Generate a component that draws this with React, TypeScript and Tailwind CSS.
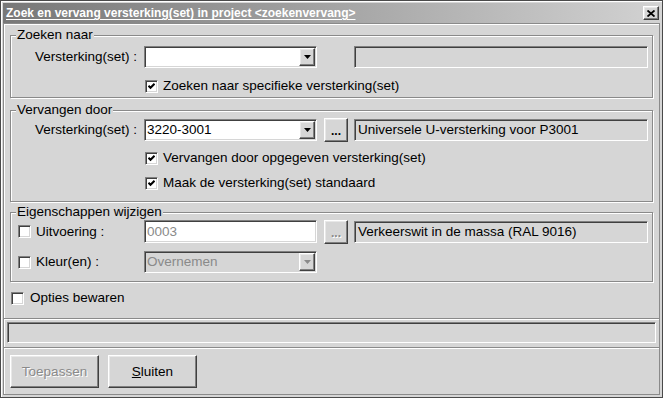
import React from "react";

const sunken =
  "border border-t-[#808080] border-l-[#808080] border-b-white border-r-white shadow-[inset_1px_1px_0_#404040,inset_-1px_-1px_0_#d6d6d6]";
const raised =
  "border border-t-white border-l-white border-b-[#404040] border-r-[#404040] shadow-[inset_-1px_-1px_0_#808080,inset_1px_1px_0_#e8e8e8]";
const group =
  "relative border border-[#8a8a8a] shadow-[inset_1px_1px_0_#fff,1px_1px_0_#fff]";

const Arrow = ({ disabled }: { disabled?: boolean }) => (
  <svg width="7" height="4" viewBox="0 0 7 4">
    <polygon points="0,0 7,0 3.5,4" fill={disabled ? "#8a8a8a" : "#000"} />
  </svg>
);

const Check = ({ checked }: { checked?: boolean }) => (
  <span className={`w-[13px] h-[13px] bg-white shrink-0 flex items-center justify-center ${sunken}`}>
    {checked && (
      <svg width="7" height="7" viewBox="0 0 7 7">
        <path d="M0.5 2.8 L2.5 4.8 L6.5 0.8" stroke="#000" strokeWidth="2" fill="none" />
      </svg>
    )}
  </span>
);

const Combo = ({ value, disabled }: { value?: string; disabled?: boolean }) => (
  <div
    className={`w-[173px] h-[22px] flex items-center shrink-0 ${sunken} ${
      disabled ? "bg-[#d6d6d6] text-[#8a8a8a]" : "bg-white text-black"
    }`}
  >
    <span className="pl-[2px] flex-1 truncate">{value}</span>
    <span className={`w-[16px] h-[18px] m-[1px] bg-[#d6d6d6] flex items-center justify-center ${raised}`}>
      <Arrow disabled={disabled} />
    </span>
  </div>
);

const Dots = ({ disabled }: { disabled?: boolean }) => (
  <button
    className={`w-[24px] h-[24px] ml-[7px] shrink-0 bg-[#d6d6d6] flex items-end justify-center pb-[4px] font-bold leading-none text-[12px] ${raised} ${
      disabled ? "text-[#8a8a8a] [text-shadow:1px_1px_0_#fff]" : "text-black"
    }`}
  >
    ...
  </button>
);

const Field = ({ value, gap = "ml-[6px]" }: { value?: string; gap?: string }) => (
  <div className={`w-[294px] h-[22px] ${gap} bg-[#d6d6d6] flex items-center pl-[3px] ${sunken}`}>
    {value}
  </div>
);

const CheckRow = ({ label, checked }: { label: string; checked?: boolean }) => (
  <div className="h-[16px] flex items-center gap-[5px] pl-[134px]">
    <Check checked={checked} />
    <span>{label}</span>
  </div>
);

const Legend = ({ text }: { text: string }) => (
  <span className="absolute left-[5px] top-[-9px] px-[1px] bg-[#d6d6d6] leading-[16px]">{text}</span>
);

export default function App() {
  return (
    <div className="w-[663px] h-[398px] bg-[#d6d6d6] border border-[#4a4a4a] p-[2px] flex flex-col shadow-[inset_1px_1px_0_#fff] font-['Liberation_Sans',Arial,sans-serif] text-[13.5px] text-black leading-none">
      <div className="h-[20px] bg-linear-to-r from-[#787878] to-[#d2d2d2] flex items-center pl-[3px] pr-[1px]">
        <span className="text-white font-bold text-[12px] underline underline-offset-2">
          Zoek en vervang versterking(set) in project &lt;zoekenvervang&gt;
        </span>
        <span className={`ml-auto w-[16px] h-[14px] bg-[#d6d6d6] flex items-center justify-center ${raised}`}>
          <svg width="8" height="7" viewBox="0 0 8 7">
            <path d="M0.5 0.5 L7.5 6.5 M7.5 0.5 L0.5 6.5" stroke="#000" strokeWidth="1.8" />
          </svg>
        </span>
      </div>

      <div className="flex-1 border border-[#8a8a8a] shadow-[inset_1px_1px_0_#fff] flex flex-col">
        <div className={`${group} mt-[11px] mx-[6px] h-[63px] pt-[10px]`}>
          <Legend text="Zoeken naar" />
          <div className="h-[22px] flex items-center">
            <span className="w-[133px] pr-[7px] text-right">Versterking(set) :</span>
            <Combo />
            <Field value="" gap="ml-[37px]" />
          </div>
          <div className="mt-[10px]">
            <CheckRow label="Zoeken naar specifieke versterking(set)" checked />
          </div>
        </div>

        <div className={`${group} mt-[12px] mx-[6px] h-[92px] pt-[7px]`}>
          <Legend text="Vervangen door" />
          <div className="h-[24px] flex items-center">
            <span className="w-[133px] pr-[7px] text-right">Versterking(set) :</span>
            <Combo value="3220-3001" />
            <Dots />
            <Field value="Universele U-versterking voor P3001" />
          </div>
          <div className="mt-[8px]">
            <CheckRow label="Vervangen door opgegeven versterking(set)" checked />
          </div>
          <div className="mt-[9px]">
            <CheckRow label="Maak de versterking(set) standaard" checked />
          </div>
        </div>

        <div className={`${group} mt-[10px] mx-[6px] h-[70px] pt-[7px]`}>
          <Legend text="Eigenschappen wijzigen" />
          <div className="h-[23px] flex items-center">
            <span className="w-[133px] pl-[7px] flex items-center gap-[5px]">
              <Check />
              Uitvoering :
            </span>
            <div className={`w-[173px] h-[23px] bg-white text-[#8a8a8a] flex items-center pl-[2px] ${sunken}`}>0003</div>
            <Dots disabled />
            <Field value="Verkeerswit in de massa (RAL 9016)" />
          </div>
          <div className="h-[22px] mt-[8px] flex items-center">
            <span className="w-[133px] pl-[7px] flex items-center gap-[5px]">
              <Check />
              Kleur(en) :
            </span>
            <Combo value="Overnemen" disabled />
          </div>
        </div>

        <div className="h-[16px] mt-[8px] ml-[7px] flex items-center gap-[6px]">
          <Check />
          <span>Opties bewaren</span>
        </div>

        <div className="mt-[12px] h-[30px] border-y border-[#8a8a8a] shadow-[inset_0_1px_0_#fff,0_1px_0_#fff] px-[3px] pt-[3px]">
          <div className={`h-[21px] ${sunken} bg-[#d6d6d6]`} />
        </div>

        <div className="mt-[7px] ml-[6px] flex gap-[9px]">
          <button className={`w-[89px] h-[33px] bg-[#d6d6d6] text-[#8a8a8a] [text-shadow:1px_1px_0_#fff] ${raised}`}>
            Toepassen
          </button>
          <button className={`w-[89px] h-[33px] bg-[#d6d6d6] text-black ${raised}`}>
            <span className="underline">S</span>luiten
          </button>
        </div>
      </div>
    </div>
  );
}
